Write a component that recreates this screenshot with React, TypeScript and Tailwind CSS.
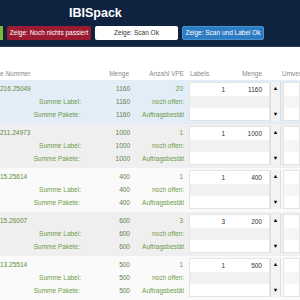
import React from "react";

type Row = {
  nummer: string;
  menge: string;
  vpe: string;
  labels: string;
  boxMenge: string;
  bg: string;
};

const rows: Row[] = [
  { nummer: "216.25049", menge: "1160", vpe: "20", labels: "1", boxMenge: "1160", bg: "bg-[#e3edf8]" },
  { nummer: "211.24973", menge: "1000", vpe: "1", labels: "1", boxMenge: "1000", bg: "bg-[#efefef]" },
  { nummer: "15.25614", menge: "400", vpe: "1", labels: "1", boxMenge: "400", bg: "bg-[#fafafa]" },
  { nummer: "15.26007", menge: "600", vpe: "3", labels: "3", boxMenge: "200", bg: "bg-[#efefef]" },
  { nummer: "13.25514", menge: "500", vpe: "1", labels: "1", boxMenge: "500", bg: "bg-[#fafafa]" },
];

function ScanRow({ row }: { row: Row }) {
  return (
    <div className={`flex h-[44px] pt-[2px] pb-[3px] ${row.bg}`}>
      <div className="flex w-[85px] shrink-0 flex-col text-[#5f8a3c]">
        <div className="h-[13px] leading-[13px]">{row.nummer}</div>
        <div className="h-[13px] pr-[4px] text-right leading-[13px] text-[#6d9c45]">Summe Label:</div>
        <div className="h-[13px] pr-[5px] text-right leading-[13px] text-[#6d9c45]">Summe Pakete:</div>
      </div>
      <div className="flex w-[45px] shrink-0 flex-col text-right text-[#5f7f4a]">
        <div className="h-[13px] leading-[13px]">{row.menge}</div>
        <div className="h-[13px] leading-[13px]">{row.menge}</div>
        <div className="h-[13px] leading-[13px]">{row.menge}</div>
      </div>
      <div className="flex w-[55px] shrink-0 flex-col pr-[1px] text-right text-[#6d9c45]">
        <div className="h-[13px] pr-[1px] leading-[13px]">{row.vpe}</div>
        <div className="h-[13px] leading-[13px]">noch offen:</div>
        <div className="h-[13px] whitespace-nowrap leading-[13px]">Auftragsbestät</div>
      </div>
      <div className="ml-[4px] flex w-[81px] shrink-0 flex-col border border-[#e4e4e4] bg-white text-[#333]">
        <div className="flex h-[13px] leading-[13px]">
          <div className="w-[35px] text-right">{row.labels}</div>
          <div className="w-[37px] text-right">{row.boxMenge}</div>
        </div>
        <div className="h-[12px] bg-[#f1f1f1]" />
        <div className="h-[12px]" />
      </div>
      <div className="flex w-[11px] shrink-0 flex-col items-center justify-between border-x border-[#dedede] bg-[#f3f3f3] text-[5.5px] leading-[13px] text-black">
        <span>▲</span>
        <span>▼</span>
      </div>
      <div className="ml-[2px] flex flex-1 flex-col border border-[#e4e4e4] bg-white">
        <div className="h-[13px]" />
        <div className="h-[12px] bg-[#f6f6f6]" />
        <div className="h-[12px]" />
      </div>
    </div>
  );
}

export default function App() {
  return (
    <div className="h-[300px] w-[300px] overflow-hidden bg-white font-['Liberation_Sans',Arial,sans-serif] text-[6.5px]">
      <header className="h-[47px] border-b border-[#2a3d58] bg-[#0f2341]">
        <div className="flex h-[26px] items-center pl-[69px]">
          <h1 className="text-[12.5px] font-bold text-white">IBISpack</h1>
        </div>
        <div className="flex h-[14px] gap-[4px]">
          <div className="w-[3px] shrink-0 bg-[#7db83a]" />
          <button type="button" className="w-[84px] shrink-0 rounded-[2px] bg-[#9b1b31] text-white">
            Zeige: Noch nichts passiert
          </button>
          <button type="button" className="w-[83px] shrink-0 rounded-[2px] bg-white text-[#333]">
            Zeige: Scan Ok
          </button>
          <button type="button" className="w-[82px] shrink-0 rounded-[2px] border border-[#4a93d2] bg-[#2b7cc2] text-white">
            Zeige: Scan und Label Ok
          </button>
        </div>
      </header>

      <div className="pt-[20px]">
        <div className="flex h-[13px] whitespace-nowrap leading-[13px] text-[#888]">
          <div className="w-[85px] shrink-0">e Nummer</div>
          <div className="w-[44px] shrink-0 text-right">Menge</div>
          <div className="w-[55px] shrink-0 text-right">Anzahl VPE</div>
          <div className="ml-[6px] w-[20px] shrink-0">Labels</div>
          <div className="w-[52px] shrink-0 text-right">Menge</div>
          <div className="ml-[20px] shrink-0">Umverpackung</div>
        </div>
        {rows.map((row) => (
          <ScanRow key={row.nummer} row={row} />
        ))}
      </div>
    </div>
  );
}
